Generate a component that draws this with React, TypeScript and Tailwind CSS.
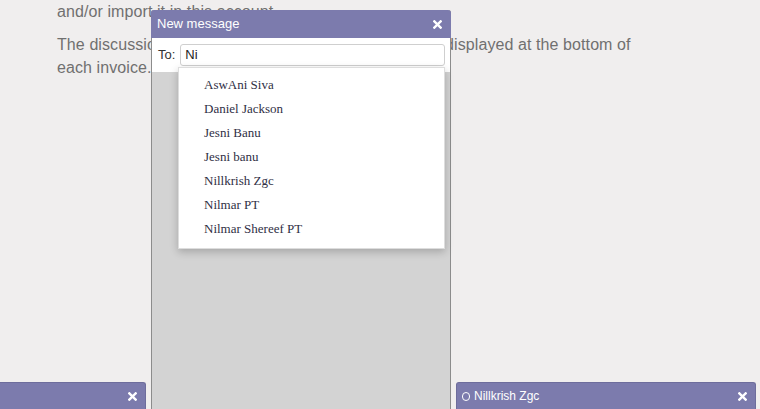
const contacts = [
  "AswAni Siva",
  "Daniel Jackson",
  "Jesni Banu",
  "Jesni banu",
  "Nillkrish Zgc",
  "Nilmar PT",
  "Nilmar Shereef PT",
];

function CloseIcon() {
  return (
    <svg width="9" height="9" viewBox="0 0 10 10" className="shrink-0">
      <path d="M1.5 1.5 L8.5 8.5 M8.5 1.5 L1.5 8.5" stroke="#fff" strokeWidth="2.6" strokeLinecap="square" />
    </svg>
  );
}

function ChatBar({ title, className }: { title?: string; className?: string }) {
  return (
    <div
      className={`w-[300px] h-[27px] shrink-0 bg-[#7c7bad] rounded-t-[3px] border border-b-0 border-[#6e6d9c] flex items-center justify-between pl-[5px] pr-[8px] text-white text-[12px] ${className ?? ""}`}
    >
      <div className="flex items-center gap-[4px]">
        {title && (
          <>
            <span className="w-[8px] h-[9px] rounded-full border-[1.5px] border-white" />
            <span>{title}</span>
          </>
        )}
      </div>
      <CloseIcon />
    </div>
  );
}

function MessageDialog() {
  return (
    <div className="w-[300px] h-[399px] shrink-0 flex flex-col bg-[#d3d3d3] border-x border-[#8c8c8c] rounded-t-[3px]">
      <div className="h-[28px] bg-[#7c7bad] rounded-t-[3px] flex items-center justify-between pl-[6px] pr-[9px] text-white text-[13px] -mx-px">
        <span>New message</span>
        <CloseIcon />
      </div>
      <div className="relative bg-white h-[34px] flex items-start pt-[6px] pl-[6px] pr-[5px] gap-[5px]">
        <span className="text-[13px] text-[#333] mt-[1px]">To:</span>
        <div className="flex-1 h-[22px] border border-[#cfcfcf] rounded-[3px] flex items-center px-[4px] text-[13px] text-[#222]">
          Ni
        </div>
        <ul className="absolute left-[26px] top-[29px] w-[267px] bg-white border border-[#ddd] shadow-[0_3px_8px_rgba(0,0,0,0.22)] pt-[5px] pb-[7px] z-10">
          {contacts.map((c) => (
            <li
              key={c}
              className="h-[24px] flex items-center pl-[25px] text-[13px] text-[#2f2f45] font-['Liberation_Serif',serif]"
            >
              {c}
            </li>
          ))}
        </ul>
      </div>
    </div>
  );
}

export default function App() {
  return (
    <div className="relative w-[760px] h-[409px] overflow-hidden bg-[#f0eeee] font-['Liberation_Sans',Arial,sans-serif]">
      <div className="pl-[57px] text-[16px] leading-[23px] tracking-[0.09px] text-[#707070] w-[650px]">
        <p>and/or import it in this account.</p>
        <p className="mt-[10px]">
          The discussions with your customer are automatically displayed at the bottom of each invoice.
        </p>
      </div>

      <div className="absolute bottom-0 right-[4px] flex items-end gap-[5px]">
        <ChatBar />
        <MessageDialog />
        <ChatBar title="Nillkrish Zgc" />
      </div>
    </div>
  );
}
